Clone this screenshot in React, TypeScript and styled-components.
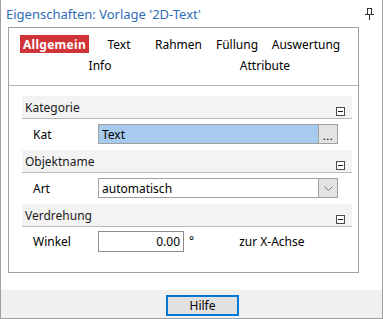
import React from "react";
import styled, { createGlobalStyle } from "styled-components";

const GlobalStyle = createGlobalStyle`
  html, body { margin: 0; padding: 0; background: #ffffff; }
  body { font-family: "Noto Sans", "Segoe UI", sans-serif; font-size: 12px; color: #000; }
  * { box-sizing: border-box; }
`;

const Window = styled.div`
  width: 383px;
  height: 319px;
  border: 1px solid #a0a0a0;
  border-top: none;
  background: #ffffff;
  display: flex;
  flex-direction: column;
`;

const TitleBar = styled.div`
  height: 27px;
  display: flex;
  align-items: center;
  justify-content: space-between;
  padding: 0 8px 0 5px;
`;

const Title = styled.span`
  color: #2f6db5;
  font-size: 13px;
  line-height: 17px;
  margin-top: 1px;
`;

const Panel = styled.div`
  margin-left: 7px;
  width: 351px;
  height: 246px;
  border: 1px solid #a0a0a0;
  display: flex;
  flex-direction: column;
`;

const TabArea = styled.div`
  height: 58px;
  border-bottom: 1px solid #b4b4b4;
  padding: 7px 0 0 11px;
  display: flex;
  flex-direction: column;
  gap: 3px;
`;

const TabRow = styled.div`
  display: flex;
  height: 18px;
`;

const Tab = styled.div<{ $w: number; $ml?: number; $active?: boolean }>`
  width: ${(p) => p.$w}px;
  margin-left: ${(p) => p.$ml ?? 0}px;
  height: 18px;
  display: flex;
  align-items: center;
  justify-content: center;
  white-space: nowrap;
  font-size: 12px;
  background: ${(p) => (p.$active ? "#d13438" : "transparent")};
  color: ${(p) => (p.$active ? "#ffffff" : "#000000")};
  font-weight: ${(p) => (p.$active ? 700 : 400)};
  letter-spacing: ${(p) => (p.$active ? "0.3px" : "0")};
`;

const Content = styled.div`
  padding: 10px 6px 0 13px;
  display: flex;
  flex-direction: column;
`;

const SectionHeader = styled.div`
  height: 23px;
  background: #f3f3f3;
  border-bottom: 1px solid #b9b9b9;
  display: flex;
  align-items: center;
  justify-content: space-between;
  padding: 0 7px 0 3px;
  color: #1a1a1a;
`;

const MinusBox = styled.span`
  align-self: flex-end;
  margin-bottom: 2px;
  width: 9px;
  height: 9px;
  border: 1px solid #4a4a4a;
  background: #ffffff;
  display: flex;
  align-items: center;
  justify-content: center;
  &::after {
    content: "";
    width: 5px;
    height: 1px;
    background: #1a1a1a;
  }
`;

const Row = styled.div<{ $h?: number; $mt?: number }>`
  height: ${(p) => p.$h ?? 20}px;
  margin: ${(p) => p.$mt ?? 5}px 0 6px;
  display: flex;
  align-items: center;
`;

const Label = styled.span`
  width: 76px;
  padding-left: 11px;
`;

const Field = styled.div<{ $w: number; $bg?: string; $border?: string }>`
  width: ${(p) => p.$w}px;
  height: 100%;
  border: 1px solid ${(p) => p.$border ?? "#a0a0a0"};
  background: ${(p) => p.$bg ?? "#ffffff"};
  display: flex;
  align-items: stretch;
`;

const FieldText = styled.span<{ $align?: string }>`
  flex: 1;
  display: flex;
  align-items: center;
  justify-content: ${(p) => (p.$align === "right" ? "flex-end" : "flex-start")};
  padding: 0 3px;
`;

const SideButton = styled.span`
  width: 19px;
  border-left: 1px solid #a0a0a0;
  background: #e3e3e3;
  display: flex;
  align-items: center;
  justify-content: center;
`;

const Dots = styled.span`
  font-size: 11px;
  line-height: 1;
  margin-top: 3px;
  letter-spacing: 0.5px;
`;

const Degree = styled.span`
  margin-left: 5px;
  align-self: flex-start;
  margin-top: 1px;
`;

const Note = styled.span`
  margin-left: 45px;
`;

const ButtonBar = styled.div`
  margin-top: 17px;
  height: 28px;
  background: #f0f0f0;
  padding: 5px 0 0 165px;
`;

const HelpButton = styled.button`
  width: 73px;
  height: 21px;
  border: 2px solid #0078d7;
  background: #e1e1e1;
  font-family: inherit;
  font-size: 12px;
  color: #000;
  padding: 0;
  display: flex;
  align-items: center;
  justify-content: center;
`;

const PinIcon = () => (
  <svg width="9" height="12" viewBox="0 0 9 12" fill="none" stroke="#333" strokeWidth="1" shapeRendering="crispEdges">
    <rect x="2.5" y="0.5" width="4" height="6" />
    <line x1="0" y1="6.5" x2="9" y2="6.5" />
    <line x1="4.5" y1="7" x2="4.5" y2="12" />
  </svg>
);

const Chevron = () => (
  <svg width="9" height="5" viewBox="0 0 9 5" fill="none" stroke="#7a7a7a" strokeWidth="1">
    <polyline points="0.5,0.5 4.5,4.5 8.5,0.5" />
  </svg>
);

export default function App() {
  return (
    <>
      <GlobalStyle />
      <Window>
        <TitleBar>
          <Title>Eigenschaften: Vorlage '2D-Text'</Title>
          <PinIcon />
        </TitleBar>
        <Panel>
          <TabArea>
            <TabRow>
              <Tab $w={69} $active>Allgemein</Tab>
              <Tab $w={60}>Text</Tab>
              <Tab $w={59}>Rahmen</Tab>
              <Tab $w={58}>Füllung</Tab>
              <Tab $w={80}>Auswertung</Tab>
            </TabRow>
            <TabRow>
              <Tab $w={60} $ml={50}>Info</Tab>
              <Tab $w={80} $ml={95}>Attribute</Tab>
            </TabRow>
          </TabArea>
          <Content>
            <SectionHeader>
              <span>Kategorie</span>
              <MinusBox />
            </SectionHeader>
            <Row>
              <Label>Kat</Label>
              <Field $w={240} $bg="#a7caef">
                <FieldText>Text</FieldText>
                <SideButton>
                  <Dots>...</Dots>
                </SideButton>
              </Field>
            </Row>
            <SectionHeader>
              <span>Objektname</span>
              <MinusBox />
            </SectionHeader>
            <Row>
              <Label>Art</Label>
              <Field $w={240}>
                <FieldText>automatisch</FieldText>
                <SideButton>
                  <Chevron />
                </SideButton>
              </Field>
            </Row>
            <SectionHeader>
              <span>Verdrehung</span>
              <MinusBox />
            </SectionHeader>
            <Row $h={21} $mt={4}>
              <Label>Winkel</Label>
              <Field $w={86} $border="#8c8c8c">
                <FieldText $align="right">0.00</FieldText>
              </Field>
              <Degree>°</Degree>
              <Note>zur X-Achse</Note>
            </Row>
          </Content>
        </Panel>
        <ButtonBar>
          <HelpButton>Hilfe</HelpButton>
        </ButtonBar>
      </Window>
    </>
  );
}
